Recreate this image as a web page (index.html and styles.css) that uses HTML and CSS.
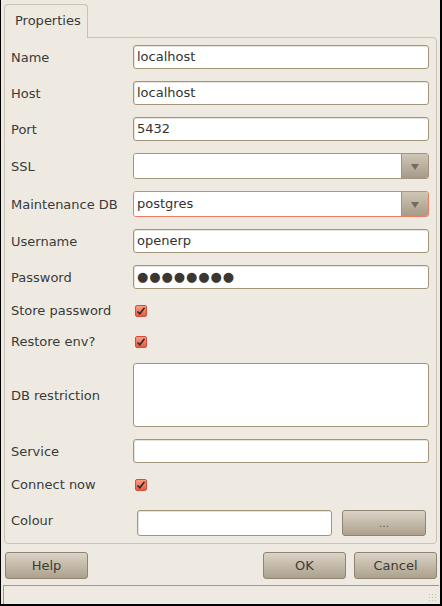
FILE: index.html
```html
<!DOCTYPE html>
<html>
<head>
<meta charset="utf-8">
<link rel="stylesheet" href="styles.css">
</head>
<body>
<div class="window">
  <div class="tabs">
    <div class="tab">Properties</div>
  </div>
  <div class="panel">
    <div class="row"><span class="label">Name</span><div class="entry">localhost</div></div>
    <div class="row"><span class="label">Host</span><div class="entry">localhost</div></div>
    <div class="row"><span class="label">Port</span><div class="entry">5432</div></div>
    <div class="row combo-row"><span class="label">SSL</span>
      <div class="combo"><div class="combo-text"></div><div class="combo-btn"><span class="tri"></span></div></div></div>
    <div class="row combo-row"><span class="label">Maintenance DB</span>
      <div class="combo focus"><div class="combo-text">postgres</div><div class="combo-btn"><span class="tri"></span></div></div></div>
    <div class="row"><span class="label">Username</span><div class="entry">openerp</div></div>
    <div class="row"><span class="label">Password</span><div class="entry pwd">●●●●●●●●</div></div>
    <div class="row check-row"><span class="label">Store password</span><span class="check"><svg viewBox="0 0 12 12" width="12" height="12"><path d="M2.5 6.5 L4.8 8.8 L9.5 2.8" fill="none" stroke="#2b2b2b" stroke-width="1.6"/></svg></span></div>
    <div class="row check-row"><span class="label">Restore env?</span><span class="check"><svg viewBox="0 0 12 12" width="12" height="12"><path d="M2.5 6.5 L4.8 8.8 L9.5 2.8" fill="none" stroke="#2b2b2b" stroke-width="1.6"/></svg></span></div>
    <div class="row text-row"><span class="label">DB restriction</span><div class="textarea"></div></div>
    <div class="row"><span class="label">Service</span><div class="entry"></div></div>
    <div class="row check-row"><span class="label">Connect now</span><span class="check"><svg viewBox="0 0 12 12" width="12" height="12"><path d="M2.5 6.5 L4.8 8.8 L9.5 2.8" fill="none" stroke="#2b2b2b" stroke-width="1.6"/></svg></span></div>
    <div class="row colour-row"><span class="label colour-label">Colour</span>
      <div class="colour-field"><div class="entry colour-entry"></div><div class="btn dots">...</div></div></div>
  </div>
  <div class="buttons">
    <div class="btn dlg">Help</div>
    <div class="spacer"></div>
    <div class="btn dlg">OK</div>
    <div class="btn dlg">Cancel</div>
  </div>
  <div class="status"><span class="grip"></span></div>
</div>
</body>
</html>
```
FILE: styles.css
```css
html, body {
  margin: 0;
  padding: 0;
}
body {
  width: 442px;
  height: 606px;
  overflow: hidden;
  background: #eeeae2;
  font-family: "DejaVu Sans", sans-serif;
  font-size: 13px;
  color: #3a3a3a;
}
.window {
  box-sizing: border-box;
  width: 442px;
  height: 606px;
  border-left: 1px solid #000;
  border-right: 2px solid #000;
  border-bottom: 2px solid #000;
  background: #eeeae2;
  display: flex;
  flex-direction: column;
}
.tabs {
  display: flex;
  padding: 4px 0 0 3px;
  position: relative;
  z-index: 1;
}
.tab {
  box-sizing: border-box;
  width: 84px;
  height: 34px;
  border: 1px solid #c9c1b2;
  border-bottom: none;
  border-radius: 4px 4px 0 0;
  background: #eeeae2;
  padding: 8px 0 0 10px;
  margin-bottom: -1px;
}
.panel {
  box-sizing: border-box;
  margin-left: 3px;
  width: 433px;
  height: 507px;
  border: 1px solid #c9c1b2;
  border-radius: 0 4px 4px 4px;
  padding: 7px 7px 0 6px;
  display: flex;
  flex-direction: column;
  gap: 12px;
}
.row {
  display: grid;
  grid-template-columns: 122px 1fr;
  align-items: center;
  height: 24px;
}
.combo-row { height: 26px; }
.check-row { height: 19px; }
.text-row { height: 64px; }
.colour-row { height: 34px; }
.label {
  white-space: nowrap;
}
.colour-label {
  padding-bottom: 5px;
}
.entry {
  box-sizing: border-box;
  height: 24px;
  background: #fff;
  border: 1px solid #a39579;
  border-radius: 3px;
  padding: 0 3px;
  line-height: 22px;
  color: #333;
  box-shadow: inset 1px 1px 0 #e8e4dc;
}
.pwd {
  font-size: 13px;
  letter-spacing: 0.9px;
  line-height: 22px;
  color: #3a3733;
  padding-left: 3px;
}
.textarea {
  box-sizing: border-box;
  height: 64px;
  background: #fff;
  border: 1px solid #a39579;
  border-radius: 3px;
}
.combo {
  box-sizing: border-box;
  height: 26px;
  display: flex;
  border: 1px solid #a39579;
  border-radius: 3px;
  overflow: hidden;
}
.combo.focus {
  border-color: #ec7f63;
}
.combo-text {
  flex: 1;
  background: #fff;
  padding: 0 3px;
  line-height: 24px;
  color: #333;
}
.combo-btn {
  width: 26px;
  border-left: 1px solid #a39579;
  background: linear-gradient(#cfc6b6, #a69b87);
  display: flex;
  align-items: center;
  justify-content: center;
}
.tri {
  width: 0;
  height: 0;
  border-left: 4px solid transparent;
  border-right: 4px solid transparent;
  border-top: 6px solid #716b61;
  margin-top: 1px;
}
.check {
  box-sizing: border-box;
  width: 12px;
  height: 12px;
  margin-left: 2px;
  border: 1px solid #d0503c;
  border-radius: 2px;
  background: linear-gradient(#fb9c86, #e65a42);
  display: flex;
}
.check svg {
  margin: -1px;
}
.colour-field {
  box-sizing: border-box;
  height: 34px;
  display: flex;
  align-items: center;
  padding: 0 3px 0 4px;
  gap: 10px;
}
.colour-entry {
  flex: 1;
  height: 26px;
}
.btn {
  box-sizing: border-box;
  border: 1px solid #8f846f;
  border-radius: 3px;
  background: linear-gradient(#dbd3c6, #ada18d);
  display: flex;
  align-items: center;
  justify-content: center;
  color: #3f3b36;
}
.dots {
  width: 84px;
  height: 26px;
  font-size: 11px;
  color: #6a645a;
}
.buttons {
  display: flex;
  gap: 8px;
  padding: 8px 3px 0 4px;
}
.spacer { flex: 1; }
.dlg {
  width: 83px;
  height: 27px;
}
.status {
  box-sizing: border-box;
  margin: 6px 1px 0 2px;
  height: 19px;
  border-top: 1px solid #9e988c;
  border-left: 1px solid #9e988c;
  position: relative;
}
.grip {
  position: absolute;
  right: 1px;
  bottom: 1px;
  width: 10px;
  height: 10px;
  background-image: radial-gradient(circle, #c6bfb2 0.8px, transparent 1px);
  background-size: 3px 3px;
}
```
